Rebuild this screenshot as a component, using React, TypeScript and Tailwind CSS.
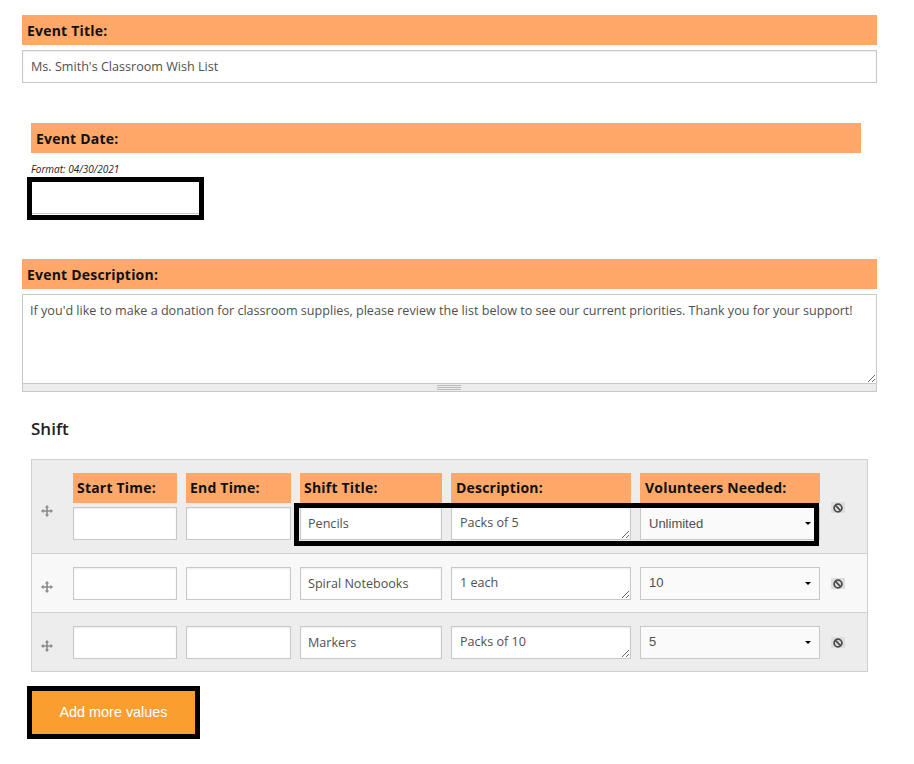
import React from "react";

const sans = "font-['Open_Sans',sans-serif]";
const arial = "font-['Liberation_Sans',Arial,sans-serif]";

function Heading({ children, className = "" }: { children: React.ReactNode; className?: string }) {
  return (
    <div className={`h-[30px] bg-[#ffa869] flex items-center text-[14px] tracking-[0.2px] font-bold text-[#111] whitespace-nowrap ${className}`}>
      {children}
    </div>
  );
}

const field =
  "block bg-white border border-[#c8c8c8] shadow-[inset_0_1px_2px_rgba(0,0,0,0.08)] text-[12.6px] text-[#505050] outline-none";

function MoveIcon() {
  return (
    <svg width="12" height="12" viewBox="0 0 12 12" fill="#8a8a8a" aria-hidden="true">
      <path d="M6 0 L8.2 2.5 H6.8 V5.2 H9.5 V3.8 L12 6 L9.5 8.2 V6.8 H6.8 V9.5 H8.2 L6 12 L3.8 9.5 H5.2 V6.8 H2.5 V8.2 L0 6 L2.5 3.8 V5.2 H5.2 V2.5 H3.8 Z" />
    </svg>
  );
}

function BanIcon() {
  return (
    <div className="w-[14px] h-[11px] bg-[#dedede] flex items-center justify-center">
      <svg width="10" height="10" viewBox="0 0 10 10" fill="none" stroke="#4a4a4a" strokeWidth="1.7" aria-hidden="true">
        <circle cx="5" cy="5" r="3.9" />
        <path d="M2.4 2.4 L7.6 7.6" />
      </svg>
    </div>
  );
}

function Row({
  title,
  desc,
  vol,
  bg,
  head,
  border,
}: {
  title: string;
  desc: string;
  vol: string;
  bg: string;
  head?: boolean;
  border?: boolean;
}) {
  const columns: [string, string][] = [
    ["Start Time:", "w-[104px] pl-[4px]"],
    ["End Time:", "w-[105px] pl-[4px]"],
    ["Shift Title:", "w-[142px] pl-[4px]"],
    ["Description:", "w-[180px] pl-[5px]"],
    ["Volunteers Needed:", "w-[180px] pl-[5px]"],
  ];
  return (
    <div className={`flex pt-[13px] ${bg} ${border ? "border-t border-[#d0d0d0]" : ""} ${head ? "h-[93px]" : "h-[59px]"}`}>
      <div className={`w-[41px] shrink-0 pl-[9px] ${head ? "pt-[32px]" : "pt-[14px]"}`}>
        <MoveIcon />
      </div>
      <div className="flex flex-col">
        {head && (
          <div className="flex gap-[9px] mb-[4px]">
            {columns.map(([label, w]) => (
              <Heading key={label} className={`${w} pb-[2px]`}>
                {label}
              </Heading>
            ))}
          </div>
        )}
        <div className="flex gap-[9px]">
          <input className={`${field} w-[104px] h-[33px]`} readOnly />
          <input className={`${field} w-[105px] h-[33px]`} readOnly />
          <input className={`${field} w-[142px] h-[33px] px-[7px] pb-px`} readOnly defaultValue={title} />
          <textarea className={`${field} w-[180px] h-[33px] px-[8px] pt-[6px] pb-0 resize overflow-hidden`} readOnly defaultValue={desc} />
          <div className="relative w-[180px] h-[33px]">
            <select
              className={`${arial} w-full h-full appearance-none bg-[#fafafa] border border-[#c8c8c8] pl-[8px] text-[13px] text-[#505050] outline-none ${head ? "" : "pb-[2px]"}`}
              defaultValue={vol}
            >
              <option>{vol}</option>
            </select>
            <div className="absolute right-[9px] top-[15px] border-x-[3px] border-x-transparent border-t-[3px] border-t-black" />
          </div>
        </div>
      </div>
      <div className={`ml-[11px] ${head ? "pt-[29px]" : "pt-[11px]"}`}>
        <BanIcon />
      </div>
    </div>
  );
}

export default function App() {
  return (
    <div className={`${sans} relative w-[914px] h-[764px] bg-white overflow-hidden pt-[15px] pl-[22px]`}>
      <div className="w-[855px]">
        <Heading className="pl-[5px]">Event Title:</Heading>
        <input
          className={`${field} w-full h-[33px] mt-[5px] px-[8px] pb-px`}
          readOnly
          defaultValue="Ms. Smith's Classroom Wish List"
        />
      </div>

      <div className="w-[830px] ml-[9px] mt-[40px]">
        <Heading className="pl-[5px]">Event Date:</Heading>
        <div className="mt-[10px] h-[12px] leading-[12px] text-[10px] italic text-[#222]">Format: 04/30/2021</div>
        <div className="w-[177px] h-[43px] -ml-[4px] mt-[2px] border-[5px] border-black bg-white pb-px">
          <div className="h-full border-b border-[#c8c8c8]" />
        </div>
      </div>

      <div className="w-[855px] mt-[39px]">
        <Heading className="pl-[5px]">Event Description:</Heading>
        <div className="mt-[5px] border border-[#c8c8c8] bg-[#ececec]">
          <textarea
            className="block w-full h-[89px] bg-white border-b border-[#c8c8c8] px-[7px] pt-[7px] text-[12.6px] text-[#505050] outline-none resize"
            readOnly
            defaultValue="If you'd like to make a donation for classroom supplies, please review the list below to see our current priorities. Thank you for your support!"
          />
          <div className="h-[7px] pr-[2px] flex flex-col items-center justify-center gap-[1px]">
            <div className="w-[24px] h-px bg-[#bbb]" />
            <div className="w-[24px] h-px bg-[#bbb]" />
            <div className="w-[24px] h-px bg-[#bbb]" />
          </div>
        </div>
      </div>

      <div className="ml-[9px] mt-[26px] text-[17px] leading-[22px] font-semibold text-[#222]">Shift</div>

      <div className="relative ml-[9px] mt-[19px] w-[837px] border border-[#d0d0d0]">
        <Row head bg="bg-[#ededed]" title="Pencils" desc="Packs of 5" vol="Unlimited" />
        <Row border bg="bg-[#f8f8f8]" title="Spiral Notebooks" desc="1 each" vol="10" />
        <Row border bg="bg-[#ededed]" title="Markers" desc="Packs of 10" vol="5" />
        <div className="absolute left-[262px] top-[43px] w-[525px] h-[43px] border-[5px] border-black pointer-events-none" />
      </div>

      <div className="ml-[5px] mt-[14px] w-[173px] h-[53px] border-[5px] border-black">
        <button className={`${arial} w-full h-full bg-[#f99e2f] text-white text-[14.4px]`}>Add more values</button>
      </div>
    </div>
  );
}
